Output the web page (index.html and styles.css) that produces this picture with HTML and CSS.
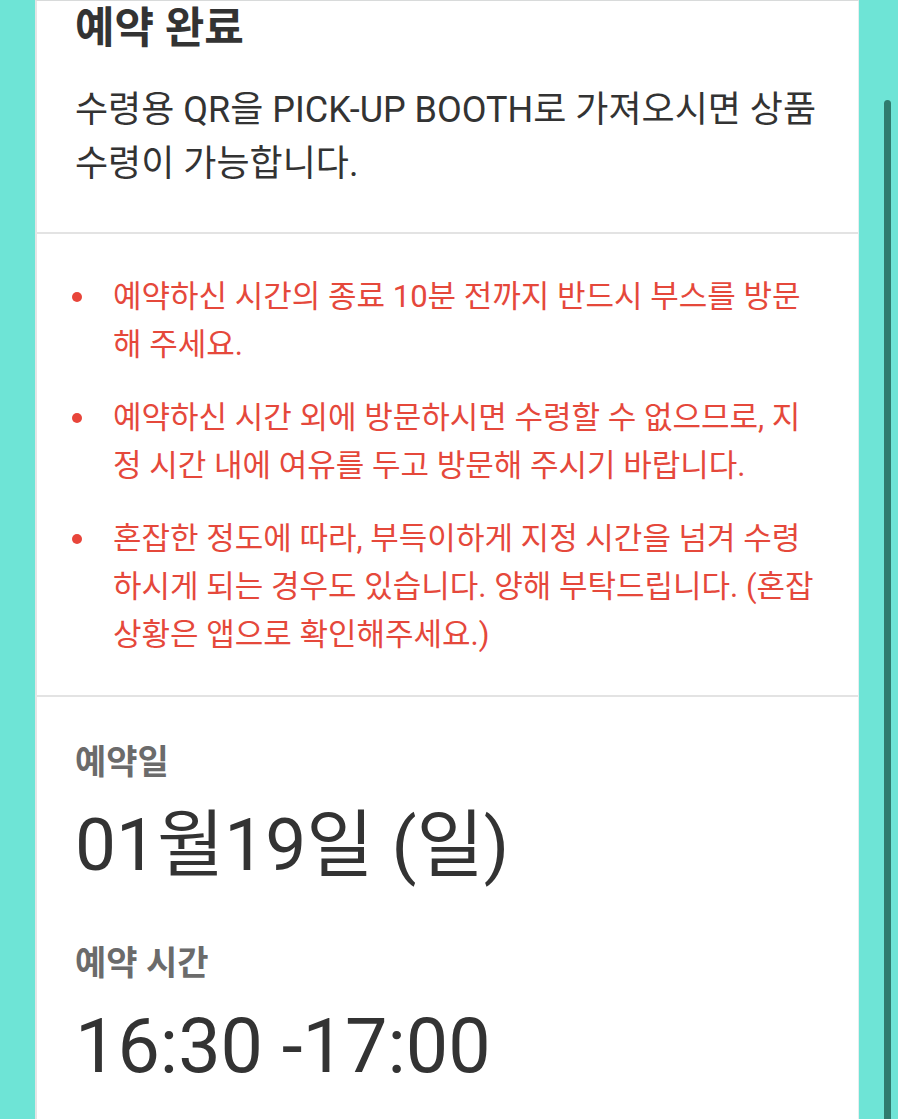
FILE: index.html
```html
<!DOCTYPE html>
<html lang="ko">
<head>
<meta charset="utf-8">
<title>예약 완료</title>
<link rel="stylesheet" href="styles.css">
</head>
<body>
<div class="page">
  <main class="card">
    <section class="intro">
      <h1 class="title">예약 완료</h1>
      <p class="lead">수령용 QR을 PICK-UP BOOTH로 가져오시면 상품 수령이 가능합니다.</p>
    </section>
    <section class="notice">
      <ul class="notes">
        <li>예약하신 시간의 종료 10분 전까지 반드시 부스를 방문해 주세요.</li>
        <li>예약하신 시간 외에 방문하시면 수령할 수 없으므로, 지정 시간 내에 여유를 두고 방문해 주시기 바랍니다.</li>
        <li>혼잡한 정도에 따라, 부득이하게 지정 시간을 넘겨 수령하시게 되는 경우도 있습니다. 양해 부탁드립니다. (혼잡 상황은 앱으로 확인해주세요.)</li>
      </ul>
    </section>
    <section class="details">
      <div class="label">예약일</div>
      <div class="value">01월19일 (일)</div>
      <div class="label label-second">예약 시간</div>
      <div class="value value-time">16:30 -17:00</div>
    </section>
  </main>
  <div class="track"><div class="thumb"></div></div>
</div>
</body>
</html>
```

FILE: styles.css
```css
html, body {
  margin: 0;
  padding: 0;
  height: 100%;
}
body {
  background: #6ee4d6;
  font-family: Roboto, "Noto Sans CJK KR", sans-serif;
  overflow: hidden;
}
.page {
  display: flex;
  height: 1119px;
  overflow: hidden;
}
.card {
  margin-left: 35px;
  width: 824px;
  flex: none;
  background: #ffffff;
  border-left: 2px solid #e4e6e6;
  border-right: 1px solid #e6eeee;
  border-top: 1px solid #d8dada;
  box-sizing: border-box;
}
.intro {
  padding: 3px 30px 41px 38px;
  border-bottom: 2px solid #e3e3e3;
}
.title {
  margin: 0;
  font-size: 43px;
  line-height: 48px;
  font-weight: 700;
  color: #333333;
}
.lead {
  margin: 31px 0 0;
  font-size: 36px;
  line-height: 54px;
  color: #333333;
  word-break: break-all;
}
.notice {
  padding: 39px 36px 36px 38px;
  border-bottom: 2px solid #e3e3e3;
}
.notes {
  margin: 0;
  padding: 0;
  list-style: none;
  display: flex;
  flex-direction: column;
  gap: 25px;
}
.notes li {
  position: relative;
  padding-left: 38px;
  font-size: 31px;
  line-height: 48px;
  color: #e5483b;
  word-break: break-all;
}
.notes li::before {
  content: "";
  position: absolute;
  left: -3px;
  top: 19px;
  width: 10px;
  height: 10px;
  border-radius: 50%;
  background: #e8453a;
}
.details {
  padding: 44px 20px 0 38px;
  color: #333333;
}
.label {
  font-size: 34px;
  line-height: 42px;
  font-weight: 700;
  color: #6b6b6b;
}
.label-second {
  margin-top: 54px;
}
.value {
  margin-top: 19px;
  font-size: 73px;
  line-height: 86px;
  color: #333333;
  white-space: nowrap;
}
.value-time {
  font-size: 75.5px;
}
.track {
  margin-left: 25px;
  width: 7px;
  flex: none;
}
.thumb {
  margin-top: 100px;
  height: 1100px;
  background: #2f7b6e;
  border-radius: 4px 4px 0 0;
}
```
